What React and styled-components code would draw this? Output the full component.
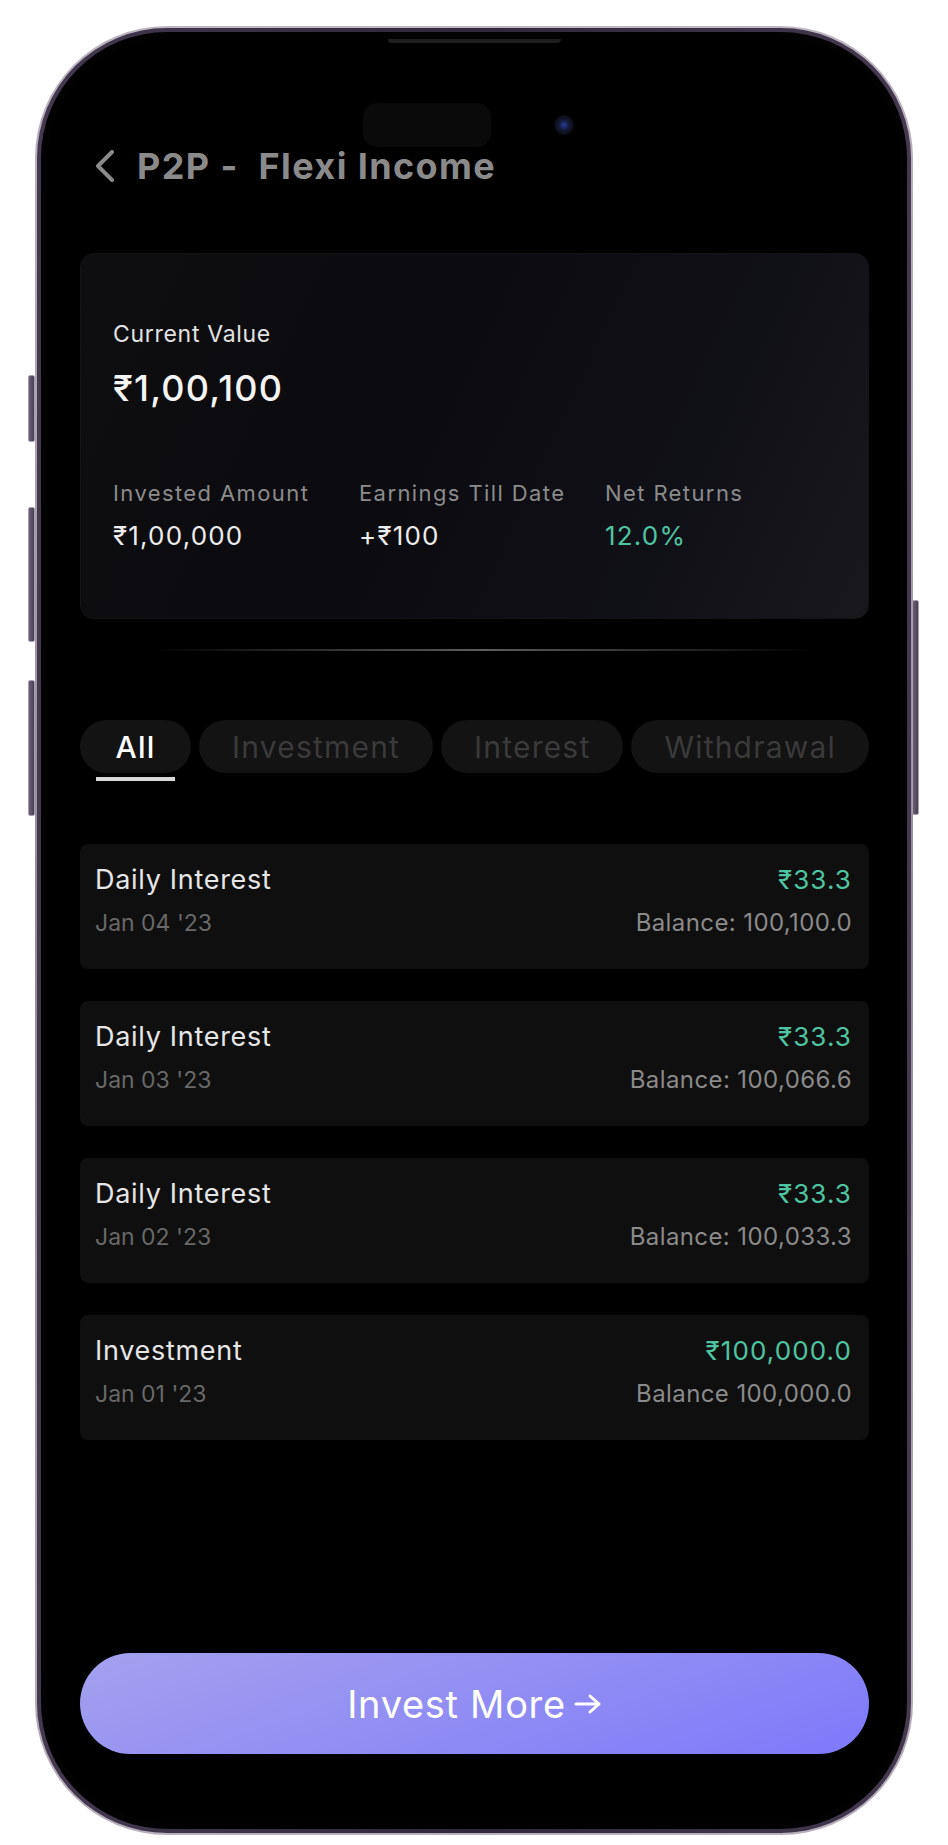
import React from 'react';
import styled, { createGlobalStyle } from 'styled-components';

const GlobalStyle = createGlobalStyle`
  html, body {
    margin: 0;
    padding: 0;
    background: #ffffff;
  }
  body {
    font-family: Inter, "Noto Sans", "DejaVu Sans", sans-serif;
    -webkit-font-smoothing: antialiased;
  }
  * {
    box-sizing: border-box;
  }
`;

const Page = styled.div`
  width: 948px;
  height: 1845px;
  padding: 26px 0 0 35px;
`;

const Phone = styled.div`
  position: relative;
  width: 878px;
  height: 1809px;
  border-radius: 132px;
  padding: 2px;
  background: linear-gradient(180deg, #bdb6c1 0%, #948b9a 50%, #b8b1bc 100%);
`;

const Rim = styled.div`
  height: 100%;
  border-radius: 130px;
  padding: 4px;
  background: linear-gradient(90deg, #44394f 0%, #30283a 50%, #44394f 100%);
`;

const Bezel = styled.div`
  height: 100%;
  border-radius: 126px;
  padding: 7px;
  background: #020202;
`;

const SideButton = styled.div`
  position: absolute;
  width: 7px;
  top: ${p => p.top}px;
  height: ${p => p.h}px;
  ${p => (p.right ? 'right: -6px;' : 'left: -7px;')}
  border-radius: 2px;
  background: linear-gradient(90deg, #6a5f76, #4a4055);
  border: 1px solid #a79fae;
`;

const Screen = styled.div`
  position: relative;
  height: 100%;
  border-radius: 119px;
  background: #000;
  overflow: hidden;
  display: flex;
  flex-direction: column;
  padding: 0 31px 68px 32px;
`;

const Speaker = styled.div`
  position: absolute;
  top: 0;
  left: 340px;
  width: 173px;
  height: 4px;
  border-radius: 0 0 4px 4px;
  background: #1e1e1e;
`;

const Island = styled.div`
  position: absolute;
  top: 64px;
  left: 315px;
  width: 128px;
  height: 44px;
  border-radius: 14px;
  background: #0a0a0a;
`;

const Camera = styled.div`
  position: absolute;
  top: 76px;
  left: 506px;
  width: 20px;
  height: 20px;
  border-radius: 50%;
  background: radial-gradient(circle, #2a3a9a 0%, #141a3a 35%, #0b0b10 70%);
`;

const Header = styled.div`
  display: flex;
  align-items: center;
  gap: 22px;
  height: 36px;
  margin-top: 109px;
  padding-left: 15px;
`;

const Title = styled.h1`
  margin: 0;
  font-size: 36px;
  line-height: 36px;
  font-weight: 700;
  color: #8a8a8a;
  letter-spacing: 1.4px;
`;

const SummaryCard = styled.section`
  height: 366px;
  margin-top: 69px;
  padding: 69px 32px 0;
  border-radius: 14px;
  border: 1px solid #141418;
  background: linear-gradient(115deg, #0e0e10 0%, #0b0b10 45%, #101017 75%, #18181c 100%);
`;

const CurrentLabel = styled.div`
  font-size: 23px;
  line-height: 1;
  color: #e2e2e2;
  letter-spacing: 0.7px;
`;

const BigValue = styled.div`
  margin-top: 24px;
  font-size: 36px;
  line-height: 1;
  font-weight: 500;
  color: #f4f4f4;
  letter-spacing: 1.2px;
`;

const Stats = styled.div`
  display: grid;
  grid-template-columns: 246px 246px 1fr;
  margin-top: 76px;
`;

const StatLabel = styled.div`
  font-size: 22px;
  line-height: 1;
  color: #8b8b8b;
  letter-spacing: 1.4px;
`;

const StatValue = styled.div`
  margin-top: 19px;
  font-size: 26px;
  line-height: 1;
  letter-spacing: 1.2px;
  color: ${p => (p.green ? '#4fc4a0' : '#ececec')};
`;

const Divider = styled.div`
  height: 2px;
  margin: 30px 55px 0 72px;
  background: linear-gradient(90deg, rgba(90, 90, 90, 0) 0%, #5e5e5e 50%, rgba(90, 90, 90, 0) 100%);
`;

const Tabs = styled.div`
  display: flex;
  justify-content: space-between;
  margin-top: 69px;
`;

const Tab = styled.div`
  position: relative;
  height: 53px;
  min-width: 111px;
  padding: 0 33px;
  border-radius: 27px;
  background: #131313;
  display: flex;
  align-items: center;
  justify-content: center;
  font-size: 30px;
  letter-spacing: 1.2px;
  font-weight: ${p => (p.active ? 500 : 400)};
  color: ${p => (p.active ? '#ffffff' : '#3a3a3a')};

  &::after {
    content: '';
    display: ${p => (p.active ? 'block' : 'none')};
    position: absolute;
    left: 16px;
    top: 57px;
    width: 79px;
    height: 4px;
    background: #d8d8d8;
  }
`;

const List = styled.div`
  display: flex;
  flex-direction: column;
  gap: 32px;
  margin-top: 71px;
`;

const TxnCard = styled.div`
  height: 125px;
  padding: 22px 17px 0 15px;
  border-radius: 8px;
  background: #0f0f0f;
  display: flex;
  justify-content: space-between;
`;

const Col = styled.div`
  display: flex;
  flex-direction: column;
  align-items: ${p => (p.end ? 'flex-end' : 'flex-start')};
`;

const TxnTitle = styled.div`
  font-size: 27px;
  line-height: 1;
  color: #e6e6e6;
  letter-spacing: 0.7px;
`;

const TxnDate = styled.div`
  margin-top: 19px;
  font-size: 23px;
  line-height: 1;
  color: #686868;
`;

const TxnAmount = styled.div`
  margin-top: 1px;
  font-size: 26px;
  line-height: 1;
  color: #4fc4a0;
  letter-spacing: 1.1px;
`;

const TxnBalance = styled.div`
  margin-top: 18px;
  font-size: 24px;
  line-height: 1;
  color: #8a8a8a;
  letter-spacing: 0.4px;
`;

const InvestButton = styled.button`
  margin-top: auto;
  height: 101px;
  width: 100%;
  border: none;
  border-radius: 51px;
  background: linear-gradient(160deg, #a4a1ee 0%, #918df3 50%, #7d79fa 100%);
  color: #ffffff;
  font-family: inherit;
  font-size: 38px;
  font-weight: 400;
  letter-spacing: 0.7px;
  display: flex;
  align-items: center;
  justify-content: center;
  gap: 8px;
`;

const Chevron = () => (
  <svg width="20" height="32" viewBox="0 0 20 32" fill="none">
    <polyline points="17,2 3,16 17,30" stroke="#8a8a8a" strokeWidth="4" strokeLinecap="round" strokeLinejoin="round" />
  </svg>
);

const Arrow = () => (
  <svg width="28" height="24" viewBox="0 0 28 24" fill="none">
    <path d="M2 12 H25 M16 4 L25 12 L16 20" stroke="#fff" strokeWidth="3" strokeLinecap="round" strokeLinejoin="round" />
  </svg>
);

const tabs = ['All', 'Investment', 'Interest', 'Withdrawal'];

const txns = [
  { title: 'Daily Interest', date: "Jan 04 '23", amount: '₹33.3', balance: 'Balance: 100,100.0' },
  { title: 'Daily Interest', date: "Jan 03 '23", amount: '₹33.3', balance: 'Balance: 100,066.6' },
  { title: 'Daily Interest', date: "Jan 02 '23", amount: '₹33.3', balance: 'Balance: 100,033.3' },
  { title: 'Investment', date: "Jan 01 '23", amount: '₹100,000.0', balance: 'Balance 100,000.0' },
];

export default function App() {
  return (
    <Page>
      <GlobalStyle />
      <Phone>
        <SideButton top={349} h={67} />
        <SideButton top={481} h={135} />
        <SideButton top={654} h={136} />
        <SideButton right top={574} h={215} />
        <Rim>
          <Bezel>
            <Screen>
              <Speaker />
              <Island />
              <Camera />
              <Header>
                <Chevron />
                <Title>P2P -&nbsp; Flexi Income</Title>
              </Header>

              <SummaryCard>
                <CurrentLabel>Current Value</CurrentLabel>
                <BigValue>₹1,00,100</BigValue>
                <Stats>
                  <div>
                    <StatLabel>Invested Amount</StatLabel>
                    <StatValue>₹1,00,000</StatValue>
                  </div>
                  <div>
                    <StatLabel>Earnings Till Date</StatLabel>
                    <StatValue>+₹100</StatValue>
                  </div>
                  <div>
                    <StatLabel>Net Returns</StatLabel>
                    <StatValue green>12.0%</StatValue>
                  </div>
                </Stats>
              </SummaryCard>

              <Divider />

              <Tabs>
                {tabs.map((t, i) => (
                  <Tab key={t} active={i === 0}>{t}</Tab>
                ))}
              </Tabs>

              <List>
                {txns.map((t, i) => (
                  <TxnCard key={i}>
                    <Col>
                      <TxnTitle>{t.title}</TxnTitle>
                      <TxnDate>{t.date}</TxnDate>
                    </Col>
                    <Col end>
                      <TxnAmount>{t.amount}</TxnAmount>
                      <TxnBalance>{t.balance}</TxnBalance>
                    </Col>
                  </TxnCard>
                ))}
              </List>

              <InvestButton>
                Invest More <Arrow />
              </InvestButton>
            </Screen>
          </Bezel>
        </Rim>
      </Phone>
    </Page>
  );
}
